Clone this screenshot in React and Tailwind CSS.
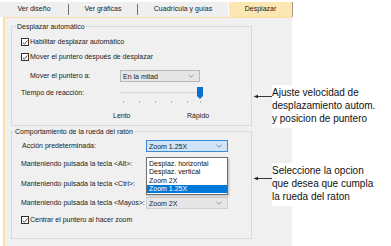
import { useState } from 'react';

const Check = () => (
  <span className="w-[8px] h-[8px] border border-[#333] bg-white flex items-center justify-center shrink-0">
    <svg width="7" height="7" viewBox="0 0 7 7">
      <path d="M0.8 3.6 L2.7 5.6 L6.3 1.2" fill="none" stroke="#222" strokeWidth="0.9" />
    </svg>
  </span>
);

const Chevron = ({ color = '#777' }) => (
  <svg width="6" height="4" viewBox="0 0 6 4" className="shrink-0">
    <path d="M0.5 0.8 L3 3.2 L5.5 0.8" fill="none" stroke={color} strokeWidth="0.8" />
  </svg>
);

const Select = ({ value, focused, className = '' }) => (
  <div
    className={`h-[12px] flex items-center justify-between pl-[2px] pr-[5px] border ${
      focused ? 'border-[#3c8ad6] bg-[#cfe5f7]' : 'border-[#b9b9b9] bg-[#e6e6e6]'
    } ${className}`}
  >
    <span className="text-[7px] leading-none text-[#1a1a1a]">{value}</span>
    <Chevron color={focused ? '#5a6e80' : '#8a8a8a'} />
  </div>
);

const tabs = ['Ver diseño', 'Ver gráficas', 'Cuadrícula y guías', 'Desplazar'];
const tabWidths = ['w-[68px]', 'w-[68px]', 'w-[90px]', 'w-[64px]'];

const listItems = ['Desplaz. horizontal', 'Desplaz. vertical', 'Zoom 2X', 'Zoom 1.25X'];

const Arrow = () => (
  <svg width="20" height="5" viewBox="0 0 20 5">
    <path d="M0.5 2.5 L5 0.8 L5 4.2 Z" fill="#222" />
    <path d="M4 2.5 L20 2.5" stroke="#222" strokeWidth="0.9" />
  </svg>
);

export default function App() {
  const [active] = useState(3);

  return (
    <div className="w-[391px] h-[246px] bg-white relative overflow-hidden font-['Liberation_Sans',Arial,sans-serif] text-[#1a1a1a]">
      <div className="w-[292px] h-full flex flex-col">
        {/* tab strip */}
        <div className="h-[17px] flex items-end bg-white">
          {tabs.map((t, i) => (
            <div key={t} className="flex items-center h-[15px]">
              <div
                className={`${tabWidths[i]} h-[15px] flex items-center justify-center text-[7px] ${
                  i === active ? 'bg-[#fce6b2] border-r border-[#a59c86]' : 'bg-[#efefef]'
                }`}
              >
                {t}
              </div>
              {i < 2 && <div className="w-[1px] h-[15px] bg-[#efefef] flex items-center"><div className="w-[1px] h-[11px] bg-[#6f6f6f]" /></div>}
              {i === 2 && <div className="w-[1px] h-[15px] bg-white" />}
            </div>
          ))}
        </div>

        {/* body */}
        <div className="flex-1 ml-[3px] border-l-2 border-t border-[#fbe0a2] bg-[#f0f0f0] pl-[6px] pr-[40px] pt-[4px]">
          <fieldset className="border border-[#d9d9d9] flex flex-col">
            <legend className="ml-[4px] px-[1px] text-[7px] leading-[9px]">Desplazar automático</legend>
            <div className="mt-[5px] h-[12px] pl-[9px] flex items-center gap-[1px] text-[7px]">
              <Check />
              <span>Habilitar desplazar automático</span>
            </div>
            <div className="mt-[3px] h-[12px] pl-[9px] flex items-center gap-[1px] text-[7px]">
              <Check />
              <span>Mover el puntero después de desplazar</span>
            </div>
            <div className="mt-[7px] h-[12px] pl-[18px] flex items-center text-[7px]">
              <span className="w-[90px]">Mover el puntero a:</span>
              <Select value="En la mitad" className="w-[80px]" />
            </div>
            <div className="mt-[3px] h-[16px] pl-[9px] flex items-center text-[7px]">
              <span className="w-[99px]">Tiempo de reacción:</span>
              <div className="relative w-[84px] h-[16px] flex items-center">
                <div className="w-[84px] h-[2px] bg-[#dadada] border-b border-[#e8e8e8]" />
                <div className="absolute left-[77px] top-[2px] w-[6px] h-[12px] bg-[#0a6fd0] [clip-path:polygon(0_0,100%_0,100%_75%,50%_100%,0_75%)]" />
              </div>
            </div>
            <div className="h-[3px] pl-[111px] flex items-start">
              {[0, 16, 16, 16, 16, 13].map((g, i) => (
                <span key={i} style={{ marginLeft: g ? g - 1 : 0 }} className="w-[1px] h-[2px] bg-[#b5b5b5]" />
              ))}
            </div>
            <div className="mt-[7px] h-[10px] flex items-center text-[7px]">
              <span className="ml-[101px] w-[74px]">Lento</span>
              <span>Rápido</span>
            </div>
            <div className="h-[4px]" />
          </fieldset>

          <fieldset className="mt-[1px] border border-[#d9d9d9] flex flex-col relative">
            <legend className="ml-[2px] px-[1px] text-[7px] leading-[9px]">Comportamiento de la rueda del ratón</legend>
            <div className="mt-[4px] h-[12px] pl-[10px] flex items-center text-[7px]">
              <span className="w-[124px]">Acción predeterminada:</span>
              <Select value="Zoom 1.25X" focused className="w-[82px]" />
            </div>
            <div className="mt-[6px] h-[12px] pl-[9px] flex items-center text-[7px]">
              <span className="w-[125px]">Manteniendo pulsada la tecla &lt;Alt&gt;:</span>
              <Select value="" className="w-[82px]" />
            </div>
            <div className="mt-[8px] h-[12px] pl-[9px] flex items-center text-[7px]">
              <span className="w-[125px]">Manteniendo pulsada la tecla &lt;Ctrl&gt;:</span>
              <Select value="" className="w-[82px] border-[#cfcfcf]" />
            </div>
            <div className="mt-[7px] h-[12px] pl-[9px] flex items-center text-[7px]">
              <span className="w-[125px] whitespace-nowrap">Manteniendo pulsada la tecla &lt;Mayús&gt;:</span>
              <Select value="Zoom 2X" className="w-[82px] border-[#cfcfcf]" />
            </div>
            <div className="mt-[5px] h-[12px] pl-[9px] flex items-center gap-[1px] text-[7px]">
              <Check />
              <span>Centrar el puntero al hacer zoom</span>
            </div>
            <div className="h-[12px]" />

            {/* open dropdown list */}
            <div className="absolute left-[134px] top-[21px] w-[82px] bg-white border border-[#6f6f6f] shadow-[1px_1px_2px_rgba(0,0,0,0.25)] flex flex-col py-[1px]">
              {listItems.map((it, i) => (
                <div
                  key={it}
                  className={`h-[8.5px] flex items-center pl-[2px] text-[7px] leading-none ${
                    i === 3 ? 'bg-[#0078d7] text-white' : 'text-[#111]'
                  }`}
                >
                  {it}
                </div>
              ))}
            </div>
          </fieldset>
        </div>
      </div>

      {/* callouts */}
      <div className="absolute left-[253px] top-[94px]">
        <Arrow />
      </div>
      <div className="absolute left-[272px] top-[85px] w-[119px] bg-white pt-[1px] pb-[3px] text-[10px] leading-[13px] text-[#111]">
        <div>Ajuste velocidad de</div>
        <div>desplazamiento autom.</div>
        <div>y posicion de puntero</div>
      </div>

      <div className="absolute left-[253px] top-[176px]">
        <Arrow />
      </div>
      <div className="absolute left-[272px] top-[163px] w-[119px] bg-white pt-[1px] pb-[3px] text-[10px] leading-[13px] text-[#111]">
        <div>Seleccione la opcion</div>
        <div>que desea que cumpla</div>
        <div>la rueda del raton</div>
      </div>
    </div>
  );
}
